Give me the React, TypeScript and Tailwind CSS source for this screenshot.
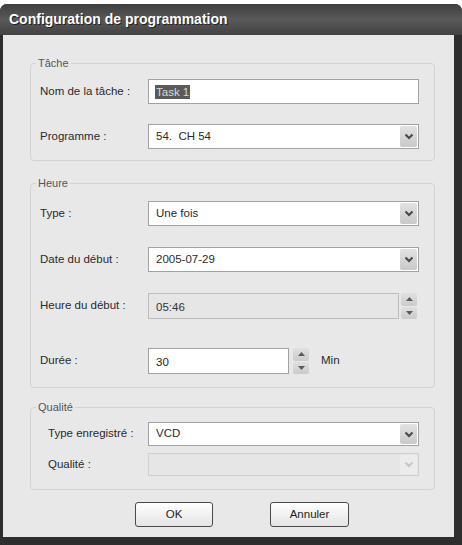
import React from "react";

const font = { fontFamily: '"Liberation Sans", Arial, sans-serif' };

const Chevron = ({ disabled }: { disabled?: boolean }) => (
  <svg width="10" height="7" viewBox="0 0 10 7">
    <path
      d="M1.5 1.5 L5 5 L8.5 1.5"
      fill="none"
      stroke={disabled ? "#c8c8c8" : "#474747"}
      strokeWidth="2"
    />
  </svg>
);

const Arrow = ({ up }: { up?: boolean }) => (
  <svg width="7" height="4" viewBox="0 0 7 4">
    <path d={up ? "M0 4 L3.5 0 L7 4 Z" : "M0 0 L3.5 4 L7 0 Z"} fill="#5a5a5a" />
  </svg>
);

const Select = ({
  value,
  disabled,
  className = "h-[25px]",
}: {
  value?: string;
  disabled?: boolean;
  className?: string;
}) => (
  <div
    className={`flex w-[271px] items-stretch border ${
      disabled ? "border-[#cfcfcf] bg-[#e6e6e6]" : "border-[#a2a2a2] bg-white"
    } ${className}`}
  >
    <span className="flex flex-1 items-center whitespace-pre pl-[7px] text-[11.5px] text-[#2a2a2a]">
      {value}
    </span>
    <span
      className={`m-px flex w-[17px] items-center justify-center rounded-[2px] ${
        disabled
          ? "bg-[#ececec]"
          : "bg-linear-to-b from-[#e2e2e2] to-[#c9c9c9]"
      }`}
    >
      <Chevron disabled={disabled} />
    </span>
  </div>
);

const Spinner = () => (
  <div className="flex h-[26px] w-[16px] flex-col gap-px">
    <span className="flex flex-1 items-center justify-center rounded-[2px] bg-linear-to-b from-[#e0e0e0] to-[#cbcbcb]">
      <Arrow up />
    </span>
    <span className="flex flex-1 items-center justify-center rounded-[2px] bg-linear-to-b from-[#e0e0e0] to-[#cbcbcb]">
      <Arrow />
    </span>
  </div>
);

const Row = ({
  label,
  labelClass = "w-[108px]",
  className = "",
  children,
}: {
  label: string;
  labelClass?: string;
  className?: string;
  children: React.ReactNode;
}) => (
  <div className={`flex items-center ${className}`}>
    <span className={`${labelClass} shrink-0 text-[11.5px] text-[#2a2a2a]`}>{label}</span>
    {children}
  </div>
);

const Group = ({
  title,
  className,
  children,
}: {
  title: string;
  className: string;
  children: React.ReactNode;
}) => (
  <div
    className={`relative ml-[27px] w-[405px] rounded-[4px] border border-[#d2d2d2] ${className}`}
  >
    <span className="absolute -top-[8px] left-[5px] bg-[#e8e8e8] px-[2px] text-[11px] leading-[14px] text-[#555]">
      {title}
    </span>
    {children}
  </div>
);

export default function App() {
  return (
    <div className="h-[545px] w-[462px] bg-white pt-[4px]" style={font}>
      <div className="flex h-[541px] flex-col overflow-hidden rounded-t-[7px] bg-[#2e2e2e]">
        <div className="flex h-[31px] shrink-0 items-center bg-linear-to-b from-[#3e3e3e] via-[#595959] to-[#424242] pl-[9px]">
          <span className="text-[14px] font-bold text-white [text-shadow:1px_1px_0_#222]">
            Configuration de programmation
          </span>
        </div>
        <div className="flex flex-1 pl-[3px] pr-[8px] pb-[8px]">
          <div className="flex flex-1 flex-col bg-[#e8e8e8]">
            <Group title="Tâche" className="mt-[28px] h-[98px] pl-[9px] pt-[15px]">
              <Row label="Nom de la tâche :">
                <div className="flex h-[25px] w-[271px] items-center border border-[#a2a2a2] bg-white pl-[6px]">
                  <span className="bg-[#5a5a5a] px-px text-[11.5px] leading-[14px] text-[#d8d8d8]">
                    Task 1
                  </span>
                </div>
              </Row>
              <Row label="Programme :" className="mt-[20px]">
                <Select value="54.  CH 54" />
              </Row>
            </Group>

            <Group title="Heure" className="mt-[22px] h-[205px] pl-[9px] pt-[17px]">
              <Row label="Type :">
                <Select value="Une fois" />
              </Row>
              <Row label="Date du début :" className="mt-[21px]">
                <Select value="2005-07-29" />
              </Row>
              <Row label="Heure du début :" className="mt-[21px]">
                <div className="h-[26px] w-[251px] border border-[#bdbdbd] bg-[#e6e6e6] pl-[7px] pt-[5px] text-[11.5px] text-[#333]">
                  05:46
                </div>
                <div className="ml-[2px]">
                  <Spinner />
                </div>
              </Row>
              <Row label="Durée :" className="mt-[29px]">
                <div className="h-[26px] w-[141px] border border-[#a2a2a2] bg-white pl-[7px] pt-[5px] text-[11.5px] text-[#222]">
                  30
                </div>
                <div className="ml-[4px]">
                  <Spinner />
                </div>
                <span className="ml-[12px] text-[11.5px] text-[#2a2a2a]">Min</span>
              </Row>
            </Group>

            <Group title="Qualité" className="mt-[19px] h-[83px] pl-[17px] pt-[14px]">
              <Row label="Type enregistré :" labelClass="w-[100px]">
                <Select value="VCD" className="h-[24px]" />
              </Row>
              <Row label="Qualité :" labelClass="w-[100px]" className="mt-[7px]">
                <Select disabled className="h-[23px]" />
              </Row>
            </Group>

            <div className="mt-[12px] flex pl-[132px]">
              <button className="h-[25px] w-[78px] rounded-[3px] border border-[#4a4a4a] bg-linear-to-b from-white to-[#e4e4e4] text-[11.5px] text-[#222]">
                OK
              </button>
              <button className="ml-[57px] h-[25px] w-[79px] rounded-[3px] border border-[#4a4a4a] bg-linear-to-b from-white to-[#e4e4e4] text-[11.5px] text-[#222]">
                Annuler
              </button>
            </div>
          </div>
        </div>
      </div>
    </div>
  );
}
